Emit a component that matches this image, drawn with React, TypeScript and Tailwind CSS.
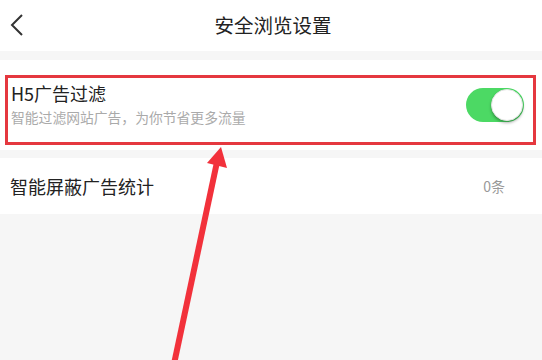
import React from 'react';

const font = { fontFamily: '"Noto Sans CJK SC", "Noto Sans", sans-serif' };

const App: React.FC = () => {
  return (
    <div className="relative w-[542px] h-[360px] overflow-hidden bg-[#f6f6f6]" style={font}>
      {/* header */}
      <div className="relative h-[51px] bg-white flex items-center justify-center">
        <svg className="absolute left-[9px] top-[13px]" width="16" height="24" viewBox="0 0 16 24">
          <path d="M13 2 L3 12 L13 22" fill="none" stroke="#333" strokeWidth="2" />
        </svg>
        <span className="text-[19.5px] text-[#222] ml-[4px] -mt-[2px]">安全浏览设置</span>
      </div>

      {/* toggle row */}
      <div className="mt-[9px] bg-white h-[90px] pt-[15px] pl-[5px]">
        <div className="w-[531px] h-[70px] border-[3px] border-[#e5383f] flex items-center justify-between pl-[3px] pr-[9px]">
          <div className="flex flex-col -mt-[13px]">
            <span className="text-[18px] leading-[26px] text-[#222]">H5广告过滤</span>
            <span className="text-[13.8px] leading-[22px] text-[#aaa]">智能过滤网站广告，为你节省更多流量</span>
          </div>
          <div className="w-[58px] h-[34px] -mt-[11px] rounded-full bg-[#4cd964] flex items-center justify-end pr-[1px]">
            <div className="w-[32px] h-[32px] rounded-full bg-white border border-[#e4e4e4] shadow-[0_2px_3px_rgba(0,0,0,0.3)]" />
          </div>
        </div>
      </div>

      {/* stats row */}
      <div className="mt-[8px] bg-white h-[56px] flex items-center justify-between pl-[10px] pr-[37px]">
        <span className="text-[18px] text-[#222]">智能屏蔽广告统计</span>
        <span className="text-[14px] text-[#999]">0条</span>
      </div>

      {/* annotation arrow */}
      <svg className="absolute left-0 top-0 pointer-events-none" width="542" height="360" viewBox="0 0 542 360">
        <line x1="174" y1="364" x2="217" y2="162" stroke="#f2313b" strokeWidth="6" />
        <polygon points="221,147 227,168 207,163" fill="#f2313b" />
      </svg>
    </div>
  );
};

export default App;
